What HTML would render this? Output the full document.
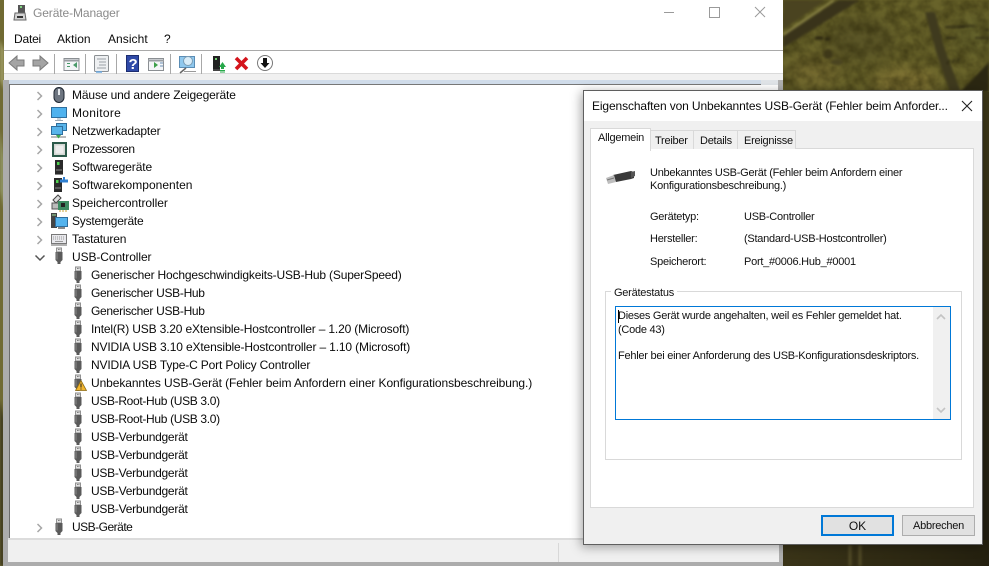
<!DOCTYPE html>
<html><head><meta charset="utf-8">
<style>
html,body{margin:0;padding:0;width:989px;height:566px;overflow:hidden;background:#4a4420}
body{position:relative;font-family:"Liberation Sans",sans-serif;color:#000}
div,span,svg{position:absolute}
.t{white-space:nowrap;font-size:12px;line-height:18px;height:18px;letter-spacing:-.14px;color:#0a0a0a}
.d{white-space:nowrap;font-size:11px;line-height:14px;letter-spacing:-.25px;color:#111}
</style></head><body>
<svg width="989" height="566" style="left:0;top:0">
<defs>
<filter id="b" x="-30%" y="-30%" width="160%" height="160%" color-interpolation-filters="sRGB"><feGaussianBlur stdDeviation="1.2"/></filter>
<filter id="bb" x="-30%" y="-30%" width="160%" height="160%" color-interpolation-filters="sRGB"><feGaussianBlur stdDeviation="7"/></filter>
<filter id="n" x="0" y="0" width="100%" height="100%" color-interpolation-filters="sRGB"><feTurbulence type="fractalNoise" baseFrequency=".09" numOctaves="3" seed="7"/><feColorMatrix values="0 0 0 0 .2  0 0 0 0 .18  0 0 0 0 .05  1.8 0 0 0 -.5"/><feGaussianBlur stdDeviation=".6"/></filter>
<linearGradient id="r" x1="0" y1="0" x2="0" y2="1"><stop offset="0" stop-color="#3c3718"/><stop offset=".55" stop-color="#2c2814"/><stop offset="1" stop-color="#1f1c10"/></linearGradient>
<linearGradient id="bt" x1="0" y1="0" x2="1" y2="0"><stop offset="0" stop-color="#2a2512"/><stop offset=".5" stop-color="#3a3418"/><stop offset="1" stop-color="#24200f"/></linearGradient>
<clipPath id="tr"><rect x="783" y="0" width="206" height="92"/></clipPath>
</defs>
<rect x="975" y="90" width="14" height="476" fill="url(#r)"/>
<rect x="580" y="540" width="409" height="26" fill="url(#bt)"/>
<rect x="0" y="0" width="10" height="566" fill="#726c34"/>
<g clip-path="url(#tr)">
<rect x="783" y="0" width="206" height="92" fill="#68632a"/>
<g filter="url(#bb)">
<ellipse cx="860" cy="40" rx="35" ry="22" fill="#5a5526"/>
<ellipse cx="905" cy="82" rx="32" ry="14" fill="#827535"/>
<ellipse cx="815" cy="72" rx="26" ry="16" fill="#73692f"/>
<ellipse cx="975" cy="35" rx="22" ry="20" fill="#65632c"/>
</g>
<rect x="783" y="0" width="206" height="92" filter="url(#n)" opacity=".65"/>
<g filter="url(#b)">
<path d="M783 0H826L783 30Z" fill="#4a4320"/>
<path d="M783 48L860 0H838L783 36Z" fill="#39331a"/>
<path d="M783 35L834 0" stroke="#8d8748" stroke-width="2" fill="none"/>
<path d="M925 12L937 55L950 92H961L945 50L935 12Z" fill="#3f3a1e"/>
<path d="M960 92L989 62V92Z" fill="#2b2712"/>
<path d="M945 27H965M946 38H956M985 30H989" stroke="#2f2a12" stroke-width="2"/>
<path d="M950 60l-3 4M955 59l-3 4M960 58l-3 4M960 26H975M975 38H989" stroke="#2a2610" stroke-width="1.500"/>
<ellipse cx="828" cy="54" rx="5" ry="5" fill="#3e3818"/><ellipse cx="837" cy="62" rx="6" ry="3" fill="#4a4420"/>
<path d="M815 38h8M825 39h5" stroke="#2a2510" stroke-width="3"/>
</g>
</g>
<g filter="url(#b)">
<path d="M0 0H4V566H0Z" fill="#6f6a33"/><path d="M0 40L4 50V90L0 80Z" fill="#9a9760"/><path d="M0 130L4 160V210L0 190Z" fill="#8f9464"/><path d="M0 400L4 420V566H0Z" fill="#3e3a1e"/>
<path d="M850 545V566M860 545V566" stroke="#6a6136" stroke-width="3" opacity=".6"/>
</g>
</svg>

<!-- main window -->
<div style="left:4px;top:0;width:779px;height:566px;background:#fff"></div>
<div class="t" style="left:33px;top:5px;font-size:12px;line-height:16px;color:#8a8a8a;letter-spacing:-.1px">Geräte-Manager</div>
<svg width="16" height="18" style="left:12px;top:4px" viewBox="0 0 16 18"><path d="M6 1h7v8H6z" fill="#555"/><path d="M8 2h2v2H8z" fill="#7fd17f"/><path d="M3 9h10l1 7H2z" fill="#d4d4d4" stroke="#666"/><path d="M5 13h6" stroke="#333" stroke-width="2"/></svg>
<svg width="140" height="20" style="left:650px;top:2px" viewBox="0 0 140 20" fill="none" stroke="#9a9a9a"><path d="M14 10.500h10"/><rect x="59.500" y="5.500" width="10" height="10"/><path d="M105 5l10 10M115 5l-10 10"/></svg>

<div class="t" style="left:14px;top:30px;letter-spacing:-.2px">Datei</div>
<div class="t" style="left:57px;top:30px;letter-spacing:.05px">Aktion</div>
<div class="t" style="left:108px;top:30px;letter-spacing:.05px">Ansicht</div>
<div class="t" style="left:164px;top:30px">?</div>
<div style="left:4px;top:50px;width:779px;height:1px;background:#a9a9a9"></div>
<div style="left:4px;top:73px;width:779px;height:1px;background:#dadada"></div>
<div style="left:4px;top:74px;width:779px;height:6px;background:#f0f0f0"></div>
<div style="left:4px;top:80px;width:779px;height:4px;background:#d0dcea"></div>
<div style="left:9px;top:84px;width:769px;height:1px;background:#777"></div>
<div style="left:3px;top:80px;width:6px;height:486px;background:#acacac"></div>
<div style="left:9px;top:84px;width:1px;height:454px;background:#6b6b6b"></div>
<div style="left:778px;top:80px;width:5px;height:486px;background:#b0b0b0"></div>
<div style="left:761px;top:80px;width:17px;height:5px;background:#e0e4e8"></div>
<div style="left:8px;top:538px;width:771px;height:2px;background:#dcdcdc"></div>
<div style="left:8px;top:540px;width:771px;height:22px;background:#f0f0f0"></div>
<div style="left:558px;top:543px;width:1px;height:19px;background:#d8d8d8"></div>
<div style="left:3px;top:562px;width:780px;height:4px;background:#acacac"></div>

<!-- toolbar -->
<svg width="280" height="24" style="left:4px;top:51px" viewBox="0 0 280 24">
<path d="M5 12l8-7v4h7v6h-7v4z" fill="#a4a4a4" stroke="#7a7a7a"/>
<path d="M44 12l-8-7v4h-7v6h7v4z" fill="#a4a4a4" stroke="#7a7a7a"/>
<path d="M50.500 3v20M81.500 3v20M112.500 3v20M166.500 3v20M197.500 3v20" stroke="#a8a8a8"/>
<rect x="60" y="7.500" width="15" height="12" fill="#f4f6f8" stroke="#8b8f93"/><path d="M60 9.500h15" stroke="#9a9ea3" stroke-width="2"/><path d="M63 12h3v1h-3zM63 15h3v1h-3zM73 11v6l-4-3z" fill="#4a9a6a"/>
<rect x="90.500" y="4.500" width="14" height="16" rx="1" fill="#eef0f2" stroke="#8b8f93"/><path d="M93 8h9M95 11h7M95 14h7M93 17h9" stroke="#9aa0a6"/><path d="M92 21h6" stroke="#6aa8e0" stroke-width="1.500"/>
<rect x="122.500" y="4.500" width="12" height="16" fill="#2f4aa8" stroke="#1c2d70"/>
<text x="124.500" y="18" font-family="Liberation Sans" font-weight="700" font-size="15" fill="#fff">?</text>
<rect x="144.500" y="7.500" width="15" height="12" fill="#f4f6f8" stroke="#8b8f93"/><path d="M144 9.500h16" stroke="#9a9ea3" stroke-width="2"/><path d="M150 11v6l4-3z" fill="#3da04a"/><path d="M156 12h3M156 15h3" stroke="#6a8fb5"/>
<rect x="175.500" y="5.500" width="15" height="11" fill="#8fc8ee" stroke="#5b8db5"/><path d="M176 22l6-5" stroke="#666" stroke-width="1.500"/><circle cx="184" cy="10" r="4.500" fill="#d8ecf8" stroke="#7b9db5"/><path d="M180 20.500h12" stroke="#999"/>
<rect x="209" y="5" width="7" height="13" fill="#222"/><rect x="211" y="7" width="2" height="2" fill="#6fd06f"/><path d="M209 18h7v2h-7z" fill="#444"/><path d="M215 16l3.500-5 3.500 5h-2v2h-3v-2z" fill="#27a84a"/><path d="M216 19.500h5M216 21h5" stroke="#27a84a"/>
<path d="M232 7l11 11M243 7l-11 11" stroke="#d4141c" stroke-width="3.600"/>
<circle cx="261" cy="12" r="7.500" fill="#fff" stroke="#777"/><path d="M259 7h4v5h2.500l-4.500 5-4.500-5H259z" fill="#111"/>
</svg>

<svg width="0" height="0" style="left:0;top:0"><defs>
<symbol id="usb" viewBox="0 0 12 18"><path d="M3.500 1h5v4h-5z" fill="#e4e4e4" stroke="#888" stroke-width=".9"/><path d="M5 2.500h.8M6.500 2.500h.8" stroke="#666"/><path d="M2.500 5h7v8l-2 2v2h-3v-2l-2-2z" fill="#5a5a5a"/><path d="M4 5.500v7" stroke="#8a8a8a"/></symbol>
<symbol id="chv" viewBox="0 0 10 10"><path d="M2.500 1l4 4-4 4" fill="none" stroke="#a6a6a6" stroke-width="1.500"/></symbol>
</defs></svg>

<!-- tree chevrons -->
<svg width="10" height="10" style="left:35px;top:91px"><use href="#chv"/></svg>
<svg width="10" height="10" style="left:35px;top:109px"><use href="#chv"/></svg>
<svg width="10" height="10" style="left:35px;top:127px"><use href="#chv"/></svg>
<svg width="10" height="10" style="left:35px;top:145px"><use href="#chv"/></svg>
<svg width="10" height="10" style="left:35px;top:163px"><use href="#chv"/></svg>
<svg width="10" height="10" style="left:35px;top:181px"><use href="#chv"/></svg>
<svg width="10" height="10" style="left:35px;top:199px"><use href="#chv"/></svg>
<svg width="10" height="10" style="left:35px;top:217px"><use href="#chv"/></svg>
<svg width="10" height="10" style="left:35px;top:235px"><use href="#chv"/></svg>
<svg width="12" height="8" style="left:34px;top:254px"><path d="M1.500 1.500l4.500 4.500 4.500-4.500" fill="none" stroke="#555" stroke-width="1.500"/></svg>
<svg width="10" height="10" style="left:35px;top:523px"><use href="#chv"/></svg>

<!-- tree icons -->
<svg width="18" height="18" style="left:50px;top:86px" viewBox="0 0 18 18"><rect x="4" y="1.500" width="10" height="15" rx="5" fill="#6d7580" stroke="#1d2530"/><path d="M9 3v6" stroke="#e4e8ec" stroke-width="2"/></svg>
<svg width="18" height="18" style="left:50px;top:104px" viewBox="0 0 18 18"><rect x="1.500" y="3.500" width="15" height="10" fill="#4fb2ee" stroke="#2f6f9e"/><path d="M7 15h4M5 16.500h8" stroke="#9aa8b4"/></svg>
<svg width="18" height="18" style="left:50px;top:122px" viewBox="0 0 18 18"><rect x="6.500" y="1.500" width="10" height="7" fill="#58b4ea" stroke="#2f6f9e"/><rect x="1.500" y="4.500" width="11" height="8" fill="#58b4ea" stroke="#2f6f9e"/><path d="M1 15h15" stroke="#bbb" stroke-width="2"/><path d="M6 13h5l-2.500 3.500z" fill="#3ca850"/></svg>
<svg width="18" height="18" style="left:50px;top:140px" viewBox="0 0 18 18"><rect x="3" y="3" width="13" height="13" fill="#d4d8d4" stroke="#2c5a4a" stroke-width="2"/><rect x="5.500" y="5.500" width="8" height="8" fill="#ededed"/></svg>
<svg width="18" height="18" style="left:50px;top:158px" viewBox="0 0 18 18"><rect x="5" y="2" width="8" height="14" fill="#2a2a2a"/><rect x="7" y="4" width="2.500" height="3" fill="#4fd04f"/><path d="M6 12h6" stroke="#888"/><path d="M5 16h8v1H5z" fill="#888"/></svg>
<svg width="18" height="18" style="left:50px;top:176px" viewBox="0 0 18 18"><rect x="4" y="2" width="8" height="14" fill="#2a2a2a"/><rect x="6" y="4" width="2.500" height="3" fill="#4fd04f"/><path d="M5 12h6" stroke="#888"/><path d="M10 3.500h3V1h2v2.500h3v3h-8z" fill="#2f7fd0"/></svg>
<svg width="20" height="18" style="left:50px;top:194px" viewBox="0 0 20 18"><path d="M3 6l5-5 3 3-5 5z" fill="#ddd" stroke="#444"/><rect x="2" y="9" width="7" height="6" fill="#bbb" stroke="#555"/><rect x="8" y="7" width="11" height="9" fill="#3d8b62"/><path d="M10 16v2M13 16v2M16 16v2" stroke="#c8a030"/><rect x="11" y="9" width="4" height="4" fill="#222"/></svg>
<svg width="20" height="18" style="left:50px;top:212px" viewBox="0 0 20 18"><rect x="1" y="1" width="6" height="15" fill="#444"/><path d="M2 3h4" stroke="#9be09b"/><rect x="5.500" y="5.500" width="12" height="9" fill="#55b4ee" stroke="#2f6f9e"/><path d="M8 16h7" stroke="#8a8a8a" stroke-width="2"/></svg>
<svg width="18" height="18" style="left:50px;top:230px" viewBox="0 0 18 18"><rect x="1.500" y="4.500" width="15" height="9" fill="#e8e8ec" stroke="#777"/><path d="M3 7h12M3 9h12" stroke="#999" stroke-dasharray="1 1"/><path d="M5 11.500h8" stroke="#999"/><path d="M1 15h16" stroke="#666"/></svg>
<svg width="12" height="18" style="left:53px;top:247px"><use href="#usb"/></svg>
<svg width="12" height="18" style="left:53px;top:518px"><use href="#usb"/></svg>
<svg width="12" height="18" style="left:72px;top:266px"><use href="#usb"/></svg>
<svg width="12" height="18" style="left:72px;top:284px"><use href="#usb"/></svg>
<svg width="12" height="18" style="left:72px;top:302px"><use href="#usb"/></svg>
<svg width="12" height="18" style="left:72px;top:320px"><use href="#usb"/></svg>
<svg width="12" height="18" style="left:72px;top:338px"><use href="#usb"/></svg>
<svg width="12" height="18" style="left:72px;top:356px"><use href="#usb"/></svg>
<svg width="12" height="18" style="left:72px;top:374px"><use href="#usb"/></svg>
<svg width="12" height="11" style="left:75px;top:380px" viewBox="0 0 12 11"><path d="M6 .500l5.500 10H.5z" fill="#f2b52e" stroke="#8a6a14" stroke-width=".8"/><path d="M6 3.500v4M6 8.500v1" stroke="#222"/></svg>
<svg width="12" height="18" style="left:72px;top:392px"><use href="#usb"/></svg>
<svg width="12" height="18" style="left:72px;top:410px"><use href="#usb"/></svg>
<svg width="12" height="18" style="left:72px;top:428px"><use href="#usb"/></svg>
<svg width="12" height="18" style="left:72px;top:446px"><use href="#usb"/></svg>
<svg width="12" height="18" style="left:72px;top:464px"><use href="#usb"/></svg>
<svg width="12" height="18" style="left:72px;top:482px"><use href="#usb"/></svg>
<svg width="12" height="18" style="left:72px;top:500px"><use href="#usb"/></svg>

<!-- tree labels -->
<div class="t" style="left:72px;top:86px;letter-spacing:-.13px">Mäuse und andere Zeigegeräte</div>
<div class="t" style="left:72px;top:104px;letter-spacing:.3px">Monitore</div>
<div class="t" style="left:72px;top:122px;letter-spacing:-.15px">Netzwerkadapter</div>
<div class="t" style="left:72px;top:140px;letter-spacing:-.43px">Prozessoren</div>
<div class="t" style="left:72px;top:158px;letter-spacing:-.09px">Softwaregeräte</div>
<div class="t" style="left:72px;top:176px;letter-spacing:.02px">Softwarekomponenten</div>
<div class="t" style="left:72px;top:194px;letter-spacing:-.05px">Speichercontroller</div>
<div class="t" style="left:72px;top:212px;letter-spacing:-.21px">Systemgeräte</div>
<div class="t" style="left:72px;top:230px;letter-spacing:-.18px">Tastaturen</div>
<div class="t" style="left:72px;top:248px;letter-spacing:-.09px">USB-Controller</div>
<div class="t" style="left:91px;top:266px;letter-spacing:-.18px">Generischer Hochgeschwindigkeits-USB-Hub (SuperSpeed)</div>
<div class="t" style="left:91px;top:284px;letter-spacing:-.3px">Generischer USB-Hub</div>
<div class="t" style="left:91px;top:302px;letter-spacing:-.3px">Generischer USB-Hub</div>
<div class="t" style="left:91px;top:320px;letter-spacing:-.16px">Intel(R) USB 3.20 eXtensible-Hostcontroller – 1.20 (Microsoft)</div>
<div class="t" style="left:91px;top:338px;letter-spacing:-.15px">NVIDIA USB 3.10 eXtensible-Hostcontroller – 1.10 (Microsoft)</div>
<div class="t" style="left:91px;top:356px;letter-spacing:-.15px">NVIDIA USB Type-C Port Policy Controller</div>
<div class="t" style="left:91px;top:374px;letter-spacing:-.09px">Unbekanntes USB-Gerät (Fehler beim Anfordern einer Konfigurationsbeschreibung.)</div>
<div class="t" style="left:91px;top:392px;letter-spacing:-.33px">USB-Root-Hub (USB 3.0)</div>
<div class="t" style="left:91px;top:410px;letter-spacing:-.33px">USB-Root-Hub (USB 3.0)</div>
<div class="t" style="left:91px;top:428px;letter-spacing:-.26px">USB-Verbundgerät</div>
<div class="t" style="left:91px;top:446px;letter-spacing:-.26px">USB-Verbundgerät</div>
<div class="t" style="left:91px;top:464px;letter-spacing:-.26px">USB-Verbundgerät</div>
<div class="t" style="left:91px;top:482px;letter-spacing:-.26px">USB-Verbundgerät</div>
<div class="t" style="left:91px;top:500px;letter-spacing:-.26px">USB-Verbundgerät</div>
<div class="t" style="left:72px;top:518px;letter-spacing:-.5px">USB-Geräte</div>

<!-- dialog -->
<div style="left:583px;top:90px;width:398px;height:453px;background:#f0f0f0;border:1px solid #5f5f5f;box-shadow:-2px 2px 10px rgba(0,0,0,.35)"></div>
<div style="left:584px;top:91px;width:398px;height:30px;background:#fff"></div>
<div class="t" style="left:592px;top:97px;letter-spacing:-.12px">Eigenschaften von Unbekanntes USB-Gerät (Fehler beim Anforder...</div>
<svg width="12" height="12" style="left:961px;top:100px"><path d="M1 1l10 10M11 1L1 11" stroke="#222" stroke-width="1.100"/></svg>

<div style="left:590px;top:148px;width:382px;height:358px;background:#fff;border:1px solid #d9d9d9"></div>
<div style="left:650px;top:130px;width:43px;height:18px;background:#f0f0f0;border:1px solid #d9d9d9;border-bottom:0"></div>
<div style="left:693px;top:130px;width:43px;height:18px;background:#f0f0f0;border:1px solid #d9d9d9;border-bottom:0"></div>
<div style="left:737px;top:130px;width:57px;height:18px;background:#f0f0f0;border:1px solid #d9d9d9;border-bottom:0"></div>
<div style="left:590px;top:128px;width:59px;height:22px;background:#fff;border:1px solid #d9d9d9;border-bottom:0"></div>
<div class="d" style="left:598px;top:131px">Allgemein</div>
<div class="d" style="left:655px;top:134px">Treiber</div>
<div class="d" style="left:700px;top:134px">Details</div>
<div class="d" style="left:744px;top:134px">Ereignisse</div>

<svg width="34" height="20" style="left:604px;top:167px" viewBox="0 0 34 20"><path d="M9 8L27 4l3 1v6l-3 1L12 15z" fill="#3a3a3a"/><path d="M27 5l4-1v5l-4 2z" fill="#555"/><path d="M2 11l8-3 2 7-8 2z" fill="#bdbdbd"/><path d="M3 13l7-2" stroke="#777"/></svg>

<div class="d" style="left:650px;top:166px">Unbekanntes USB-Gerät (Fehler beim Anfordern einer</div>
<div class="d" style="left:650px;top:179px">Konfigurationsbeschreibung.)</div>
<div class="d" style="left:650px;top:210px">Gerätetyp:</div>
<div class="d" style="left:744px;top:210px">USB-Controller</div>
<div class="d" style="left:650px;top:232px">Hersteller:</div>
<div class="d" style="left:744px;top:232px">(Standard-USB-Hostcontroller)</div>
<div class="d" style="left:650px;top:255px">Speicherort:</div>
<div class="d" style="left:744px;top:255px">Port_#0006.Hub_#0001</div>

<div style="left:605px;top:291px;width:355px;height:167px;border:1px solid #d9d9d9"></div>
<div class="d" style="left:611px;top:286px;background:#fff;padding:0 3px">Gerätestatus</div>

<div style="left:615px;top:306px;width:334px;height:112px;background:#fff;border:1px solid #0078d7"></div>
<div style="left:933px;top:307px;width:17px;height:112px;background:#f0f0f0"></div>
<svg width="10" height="6" style="left:936px;top:314px"><path d="M1 5l4-4 4 4" fill="none" stroke="#c4c4c4" stroke-width="1.600"/></svg>
<svg width="10" height="6" style="left:936px;top:407px"><path d="M1 1l4 4 4-4" fill="none" stroke="#c4c4c4" stroke-width="1.600"/></svg>
<div style="left:618px;top:310px;width:1px;height:13px;background:#000"></div>
<div class="d" style="left:618px;top:309px">Dieses Gerät wurde angehalten, weil es Fehler gemeldet hat.</div>
<div class="d" style="left:618px;top:323px">(Code 43)</div>
<div class="d" style="left:618px;top:349px">Fehler bei einer Anforderung des USB-Konfigurationsdeskriptors.</div>

<div class="d" style="left:821px;top:515px;width:69px;height:17px;border:2px solid #0078d7;background:#e1e1e1;text-align:center;line-height:19px;font-size:12px;letter-spacing:0">OK</div>
<div class="d" style="left:902px;top:515px;width:71px;height:19px;border:1px solid #adadad;background:#e1e1e1;text-align:center;line-height:21px">Abbrechen</div>
</body></html>
